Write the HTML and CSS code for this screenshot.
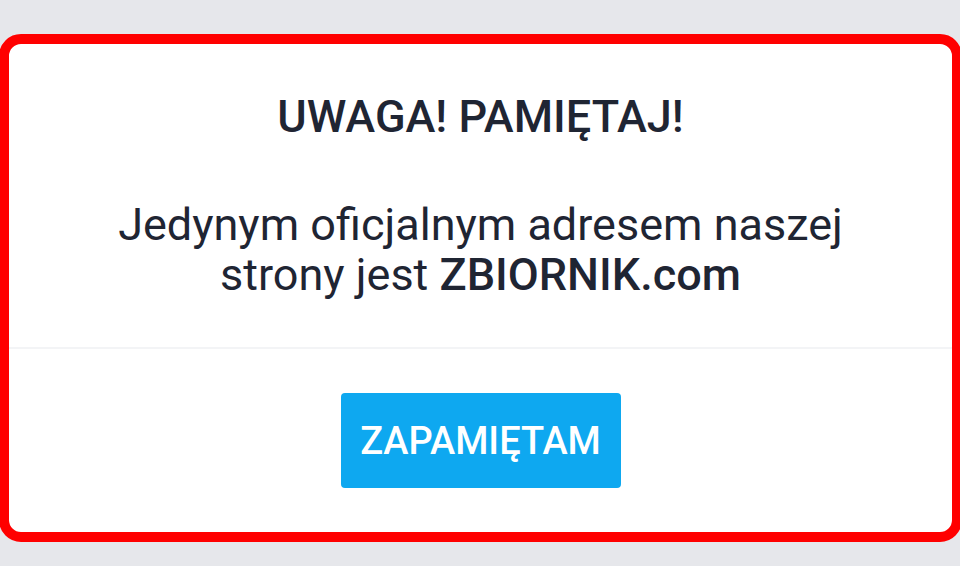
FILE: index.html
```html
<!DOCTYPE html>
<html lang="pl">
<head>
  <meta charset="UTF-8" />
  <meta name="viewport" content="width=device-width, initial-scale=1" />
  <title>Uwaga</title>
  <link rel="stylesheet" href="styles.css">
</head>
<body>
  <div class="notice">
    <div class="notice__body">
      <h2 class="notice__title">UWAGA! PAMIĘTAJ!</h2>
      <p class="notice__text">Jedynym oficjalnym adresem naszej<br>strony jest <strong>ZBIORNIK.com</strong></p>
    </div>
    <div class="notice__footer">
      <button class="notice__btn">ZAPAMIĘTAM</button>
    </div>
  </div>
</body>
</html>
```

FILE: styles.css
```css
body {
  margin: 0;
  background: #e6e7eb;
  font-family: Roboto, 'Noto Sans', sans-serif;
  color: #1f2533;
  overflow: hidden;
}
.notice {
  margin: 34px 0 0 -1px;
  width: 943px;
  background: #fff;
  border: 10px solid #ff0000;
  border-radius: 22px;
}
.notice__body {
  padding: 46px 20px 47px;
  text-align: center;
  border-bottom: 2px solid #f3f4f6;
}
.notice__title {
  margin: 0 0 56px;
  font-size: 45px;
  font-weight: 500;
  line-height: 54px;
}
.notice__text {
  margin: 0;
  font-size: 45px;
  line-height: 50px;
}
.notice__text strong {
  font-weight: 500;
}
.notice__footer {
  display: flex;
  justify-content: center;
  padding: 44px 0;
}
.notice__btn {
  width: 280px;
  height: 95px;
  border: none;
  border-radius: 4px;
  background: #0ea8f0;
  color: #fff;
  font-family: inherit;
  font-size: 38px;
  font-weight: 500;
}
```
